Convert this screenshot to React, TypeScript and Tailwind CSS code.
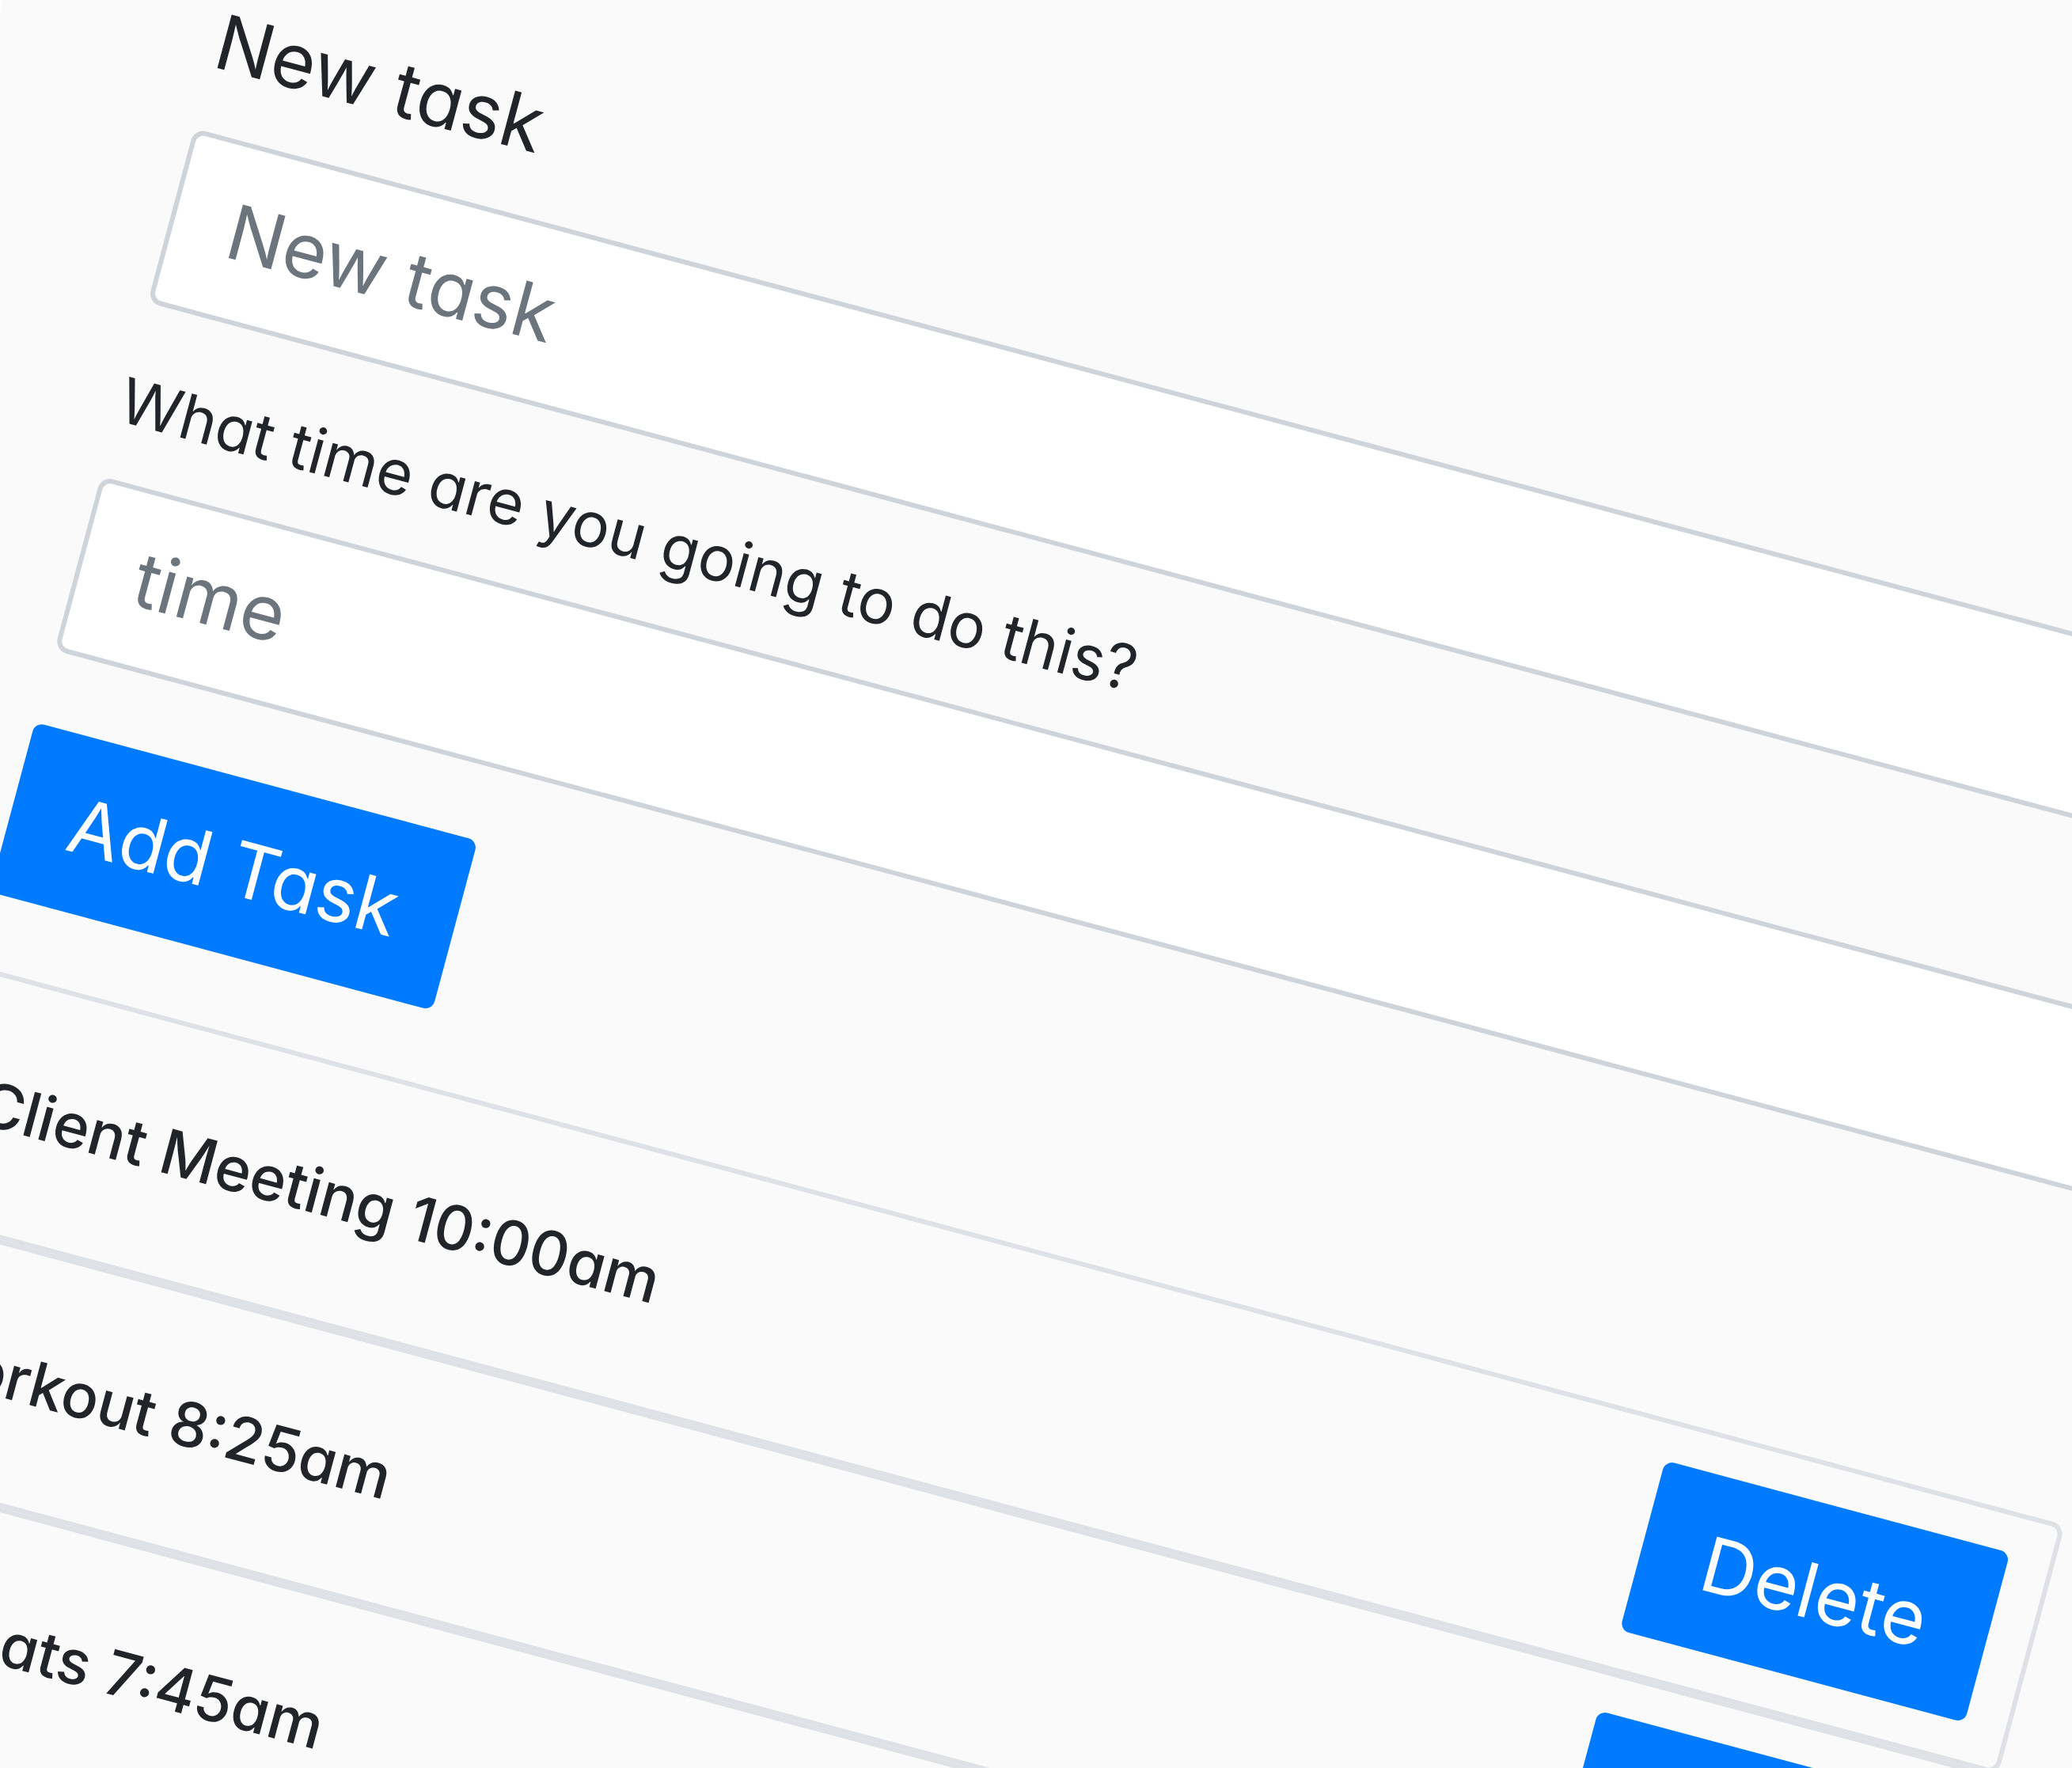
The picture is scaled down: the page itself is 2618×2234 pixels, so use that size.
import { useState } from "react";

type Task = { title: string; time: string };

const initialTasks: Task[] = [
  { title: "Client Meeting", time: "10:00am" },
  { title: "Workout", time: "8:25am" },
  { title: "Eat Oats", time: "7:45am" },
];

const fieldClass =
  "block h-[228px] w-full rounded-[16px] border-[6px] border-[#ced4da] bg-white px-[70px] pb-[4px] text-[96px] text-[#495057] outline-none placeholder:text-[#6c757d]";

const buttonClass =
  "h-[222px] shrink-0 cursor-pointer rounded-[12px] bg-[#007bff] text-[96px] leading-none text-white";

export default function App() {
  const [tasks, setTasks] = useState<Task[]>(initialTasks);
  const [title, setTitle] = useState("");
  const [time, setTime] = useState("");

  const addTask = () => {
    if (!title) return;
    setTasks([...tasks, { title, time }]);
    setTitle("");
    setTime("");
  };

  return (
    <div className="h-screen overflow-hidden bg-white">
      <main className="min-h-[3000px] w-[126vw] origin-top-left bg-[#fafafa] pt-[625px] pr-[284px] pl-[275px] font-['Inter',sans-serif] text-[#212529] [font-feature-settings:'cv11'] [transform:rotate(15deg)_translate(4px,-720px)]">
        <form
          className="flex flex-col items-start"
          onSubmit={(e) => {
            e.preventDefault();
            addTask();
          }}
        >
          <label htmlFor="task" className="mb-[44px] text-[96px] leading-[144px]">
            New task
          </label>
          <input
            id="task"
            className={fieldClass}
            placeholder="New task"
            value={title}
            onChange={(e) => setTitle(e.target.value)}
          />
          <label htmlFor="time" className="mt-[68px] mb-[44px] text-[79px] leading-[115px]">
            What time are you going to do this?
          </label>
          <input
            id="time"
            className={fieldClass}
            placeholder="time"
            value={time}
            onChange={(e) => setTime(e.target.value)}
          />
          <button type="submit" className={`mt-[94px] px-[76px] ${buttonClass}`}>
            Add Task
          </button>
        </form>
        <ul className="mt-[94px]">
          {tasks.map((task, i) => (
            <li
              key={i}
              className="flex min-h-[327px] items-start justify-between rounded-[16px] border-[6px] border-[#dee2e6] px-[52px] pt-[46px]"
            >
              <span className="pt-[54px] text-[78px] leading-[115px] font-medium">
                {task.title} {task.time}
              </span>
              <button
                type="button"
                className={`px-[80px] ${buttonClass}`}
                onClick={() => setTasks(tasks.filter((_, j) => j !== i))}
              >
                Delete
              </button>
            </li>
          ))}
        </ul>
      </main>
    </div>
  );
}
